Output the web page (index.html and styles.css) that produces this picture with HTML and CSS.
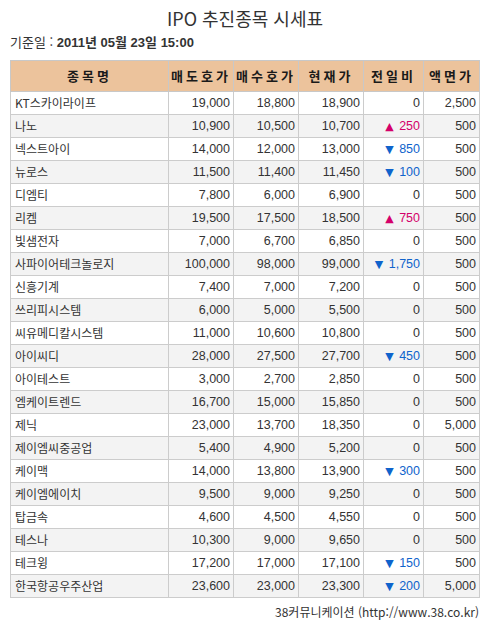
FILE: index.html
```html
<!DOCTYPE html>
<html lang="ko">
<head>
    <meta charset="UTF-8">
    <title>IPO 추진종목 시세표</title>
    <link rel="stylesheet" href="styles.css">
</head>
<body>
    <h1 class="title">IPO 추진종목 시세표</h1>
    <div class="base-date">기준일 : <b>2011년 05월 23일 15:00</b></div>

    <table class="quotes">
        <colgroup>
            <col class="c-name"><col class="c-num"><col class="c-num"><col class="c-num"><col class="c-diff"><col class="c-face">
        </colgroup>
        <thead>
            <tr><th>종목명</th><th>매도호가</th><th>매수호가</th><th>현재가</th><th>전일비</th><th>액면가</th></tr>
        </thead>
        <tbody>
            <tr><td>KT스카이라이프</td><td>19,000</td><td>18,800</td><td>18,900</td><td>0</td><td>2,500</td></tr>
            <tr><td>나노</td><td>10,900</td><td>10,500</td><td>10,700</td><td class="up"><span class="tri">▲</span> 250</td><td>500</td></tr>
            <tr><td>넥스트아이</td><td>14,000</td><td>12,000</td><td>13,000</td><td class="down"><span class="tri">▼</span> 850</td><td>500</td></tr>
            <tr><td>뉴로스</td><td>11,500</td><td>11,400</td><td>11,450</td><td class="down"><span class="tri">▼</span> 100</td><td>500</td></tr>
            <tr><td>디엠티</td><td>7,800</td><td>6,000</td><td>6,900</td><td>0</td><td>500</td></tr>
            <tr><td>리켐</td><td>19,500</td><td>17,500</td><td>18,500</td><td class="up"><span class="tri">▲</span> 750</td><td>500</td></tr>
            <tr><td>빛샘전자</td><td>7,000</td><td>6,700</td><td>6,850</td><td>0</td><td>500</td></tr>
            <tr><td>사파이어테크놀로지</td><td>100,000</td><td>98,000</td><td>99,000</td><td class="down"><span class="tri">▼</span> 1,750</td><td>500</td></tr>
            <tr><td>신흥기계</td><td>7,400</td><td>7,000</td><td>7,200</td><td>0</td><td>500</td></tr>
            <tr><td>쓰리피시스템</td><td>6,000</td><td>5,000</td><td>5,500</td><td>0</td><td>500</td></tr>
            <tr><td>씨유메디칼시스템</td><td>11,000</td><td>10,600</td><td>10,800</td><td>0</td><td>500</td></tr>
            <tr><td>아이씨디</td><td>28,000</td><td>27,500</td><td>27,700</td><td class="down"><span class="tri">▼</span> 450</td><td>500</td></tr>
            <tr><td>아이테스트</td><td>3,000</td><td>2,700</td><td>2,850</td><td>0</td><td>500</td></tr>
            <tr><td>엠케이트렌드</td><td>16,700</td><td>15,000</td><td>15,850</td><td>0</td><td>500</td></tr>
            <tr><td>제닉</td><td>23,000</td><td>13,700</td><td>18,350</td><td>0</td><td>5,000</td></tr>
            <tr><td>제이엠씨중공업</td><td>5,400</td><td>4,900</td><td>5,200</td><td>0</td><td>500</td></tr>
            <tr><td>케이맥</td><td>14,000</td><td>13,800</td><td>13,900</td><td class="down"><span class="tri">▼</span> 300</td><td>500</td></tr>
            <tr><td>케이엠에이치</td><td>9,500</td><td>9,000</td><td>9,250</td><td>0</td><td>500</td></tr>
            <tr><td>탑금속</td><td>4,600</td><td>4,500</td><td>4,550</td><td>0</td><td>500</td></tr>
            <tr><td>테스나</td><td>10,300</td><td>9,000</td><td>9,650</td><td>0</td><td>500</td></tr>
            <tr><td>테크윙</td><td>17,200</td><td>17,000</td><td>17,100</td><td class="down"><span class="tri">▼</span> 150</td><td>500</td></tr>
            <tr><td>한국항공우주산업</td><td>23,600</td><td>23,000</td><td>23,300</td><td class="down"><span class="tri">▼</span> 200</td><td>5,000</td></tr>
        </tbody>
    </table>

    <div class="source">38커뮤니케이션 (http://www.38.co.kr)</div>
</body>
</html>
```

FILE: styles.css
```css
/* 기본 */
body {
    margin: 0;
    padding: 0;
    background: #fff;
    color: #333;
    font-family: "Noto Sans CJK KR", "Liberation Sans", sans-serif;
    font-size: 12px;
}

/* 제목 */
.title {
    margin: 6px 0 0;
    font-size: 18px;
    font-weight: normal;
    line-height: 24px;
    text-align: center;
    color: #333;
}

.base-date {
    margin: 3px 0 0 10px;
    font-size: 13px;
    line-height: 18px;
}

.base-date b {
    font-family: "Liberation Sans", "Noto Sans CJK KR", sans-serif;
}

/* 시세표 */
.quotes {
    margin: 8px 0 0 10px;
    width: 469px;
    border-collapse: collapse;
    table-layout: fixed;
}

.c-name { width: 158px; }
.c-num { width: 65px; }
.c-diff { width: 60px; }
.c-face { width: 56px; }

.quotes thead tr {
    height: 31px;
}

.quotes th {
    padding: 0;
    background: #ecc39c;
    border: 1px solid #c8c8c8;
    font-size: 13px;
    font-weight: bold;
    line-height: 18px;
    letter-spacing: 3px;
    color: #1a1a1a;
    text-align: center;
}

.quotes tbody tr {
    height: 23px;
}

.quotes td {
    padding: 0 3px 0 4px;
    border: 1px solid #cccccc;
    text-align: right;
    font-family: "Liberation Sans", "Noto Sans CJK KR", sans-serif;
    font-size: 12.5px;
    line-height: 16px;
    white-space: nowrap;
    overflow: hidden;
}

.quotes td:first-child {
    padding-left: 4px;
    text-align: left;
    font-family: "Noto Sans CJK KR", sans-serif;
    font-size: 12px;
}

.quotes tbody tr:nth-child(even) td {
    background: #f3f3f3;
}

.up { color: #d4006a; }
.down { color: #0f63cc; }

.tri {
    margin-right: 2px;
    font-family: "DejaVu Sans", sans-serif;
    font-size: 11px;
}

/* 출처 */
.source {
    margin: 5px 11px 0 0;
    text-align: right;
    line-height: 18px;
}
```
